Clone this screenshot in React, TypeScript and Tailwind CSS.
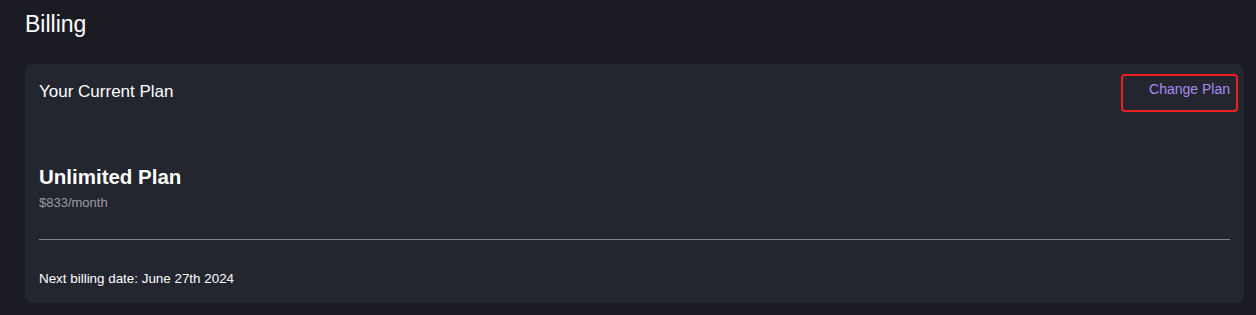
export default function App() {
  return (
    <div
      className="min-h-[315px] w-full bg-[#1b1c23] pl-[25px] pr-[12px] pt-[8px] pb-[13px] text-white"
      style={{ fontFamily: '"Liberation Sans", Arial, sans-serif' }}
    >
      <h1 className="text-[23px] leading-[32px] font-normal text-white">Billing</h1>

      <section className="mt-[24px] rounded-[8px] bg-[#23262e] px-[14px] pt-[16px] pb-[15px]">
        <div className="flex h-6 items-start justify-between">
          <h2 className="text-[17px] leading-6 text-white">Your Current Plan</h2>
          <button className="-mt-[6px] -mr-2 flex h-[38px] w-[117px] items-start justify-end rounded-[4px] border-2 border-[#f01e1e] pt-[3px] pr-[6px] text-[14px] leading-5 font-medium text-[#a98bf0]">
            Change Plan
          </button>
        </div>

        <div className="mt-[59px]">
          <p className="text-[20.5px] leading-7 font-bold text-white">Unlimited Plan</p>
          <p className="mt-[3px] text-[13px] leading-[18px] text-[#9a9ca3]">$833/month</p>
        </div>

        <hr className="mt-[27px] border-0 border-t border-[#80838a]" />

        <p className="mt-[30px] text-[13.4px] leading-[18px] text-white">
          Next billing date: June 27th 2024
        </p>
      </section>
    </div>
  );
}
